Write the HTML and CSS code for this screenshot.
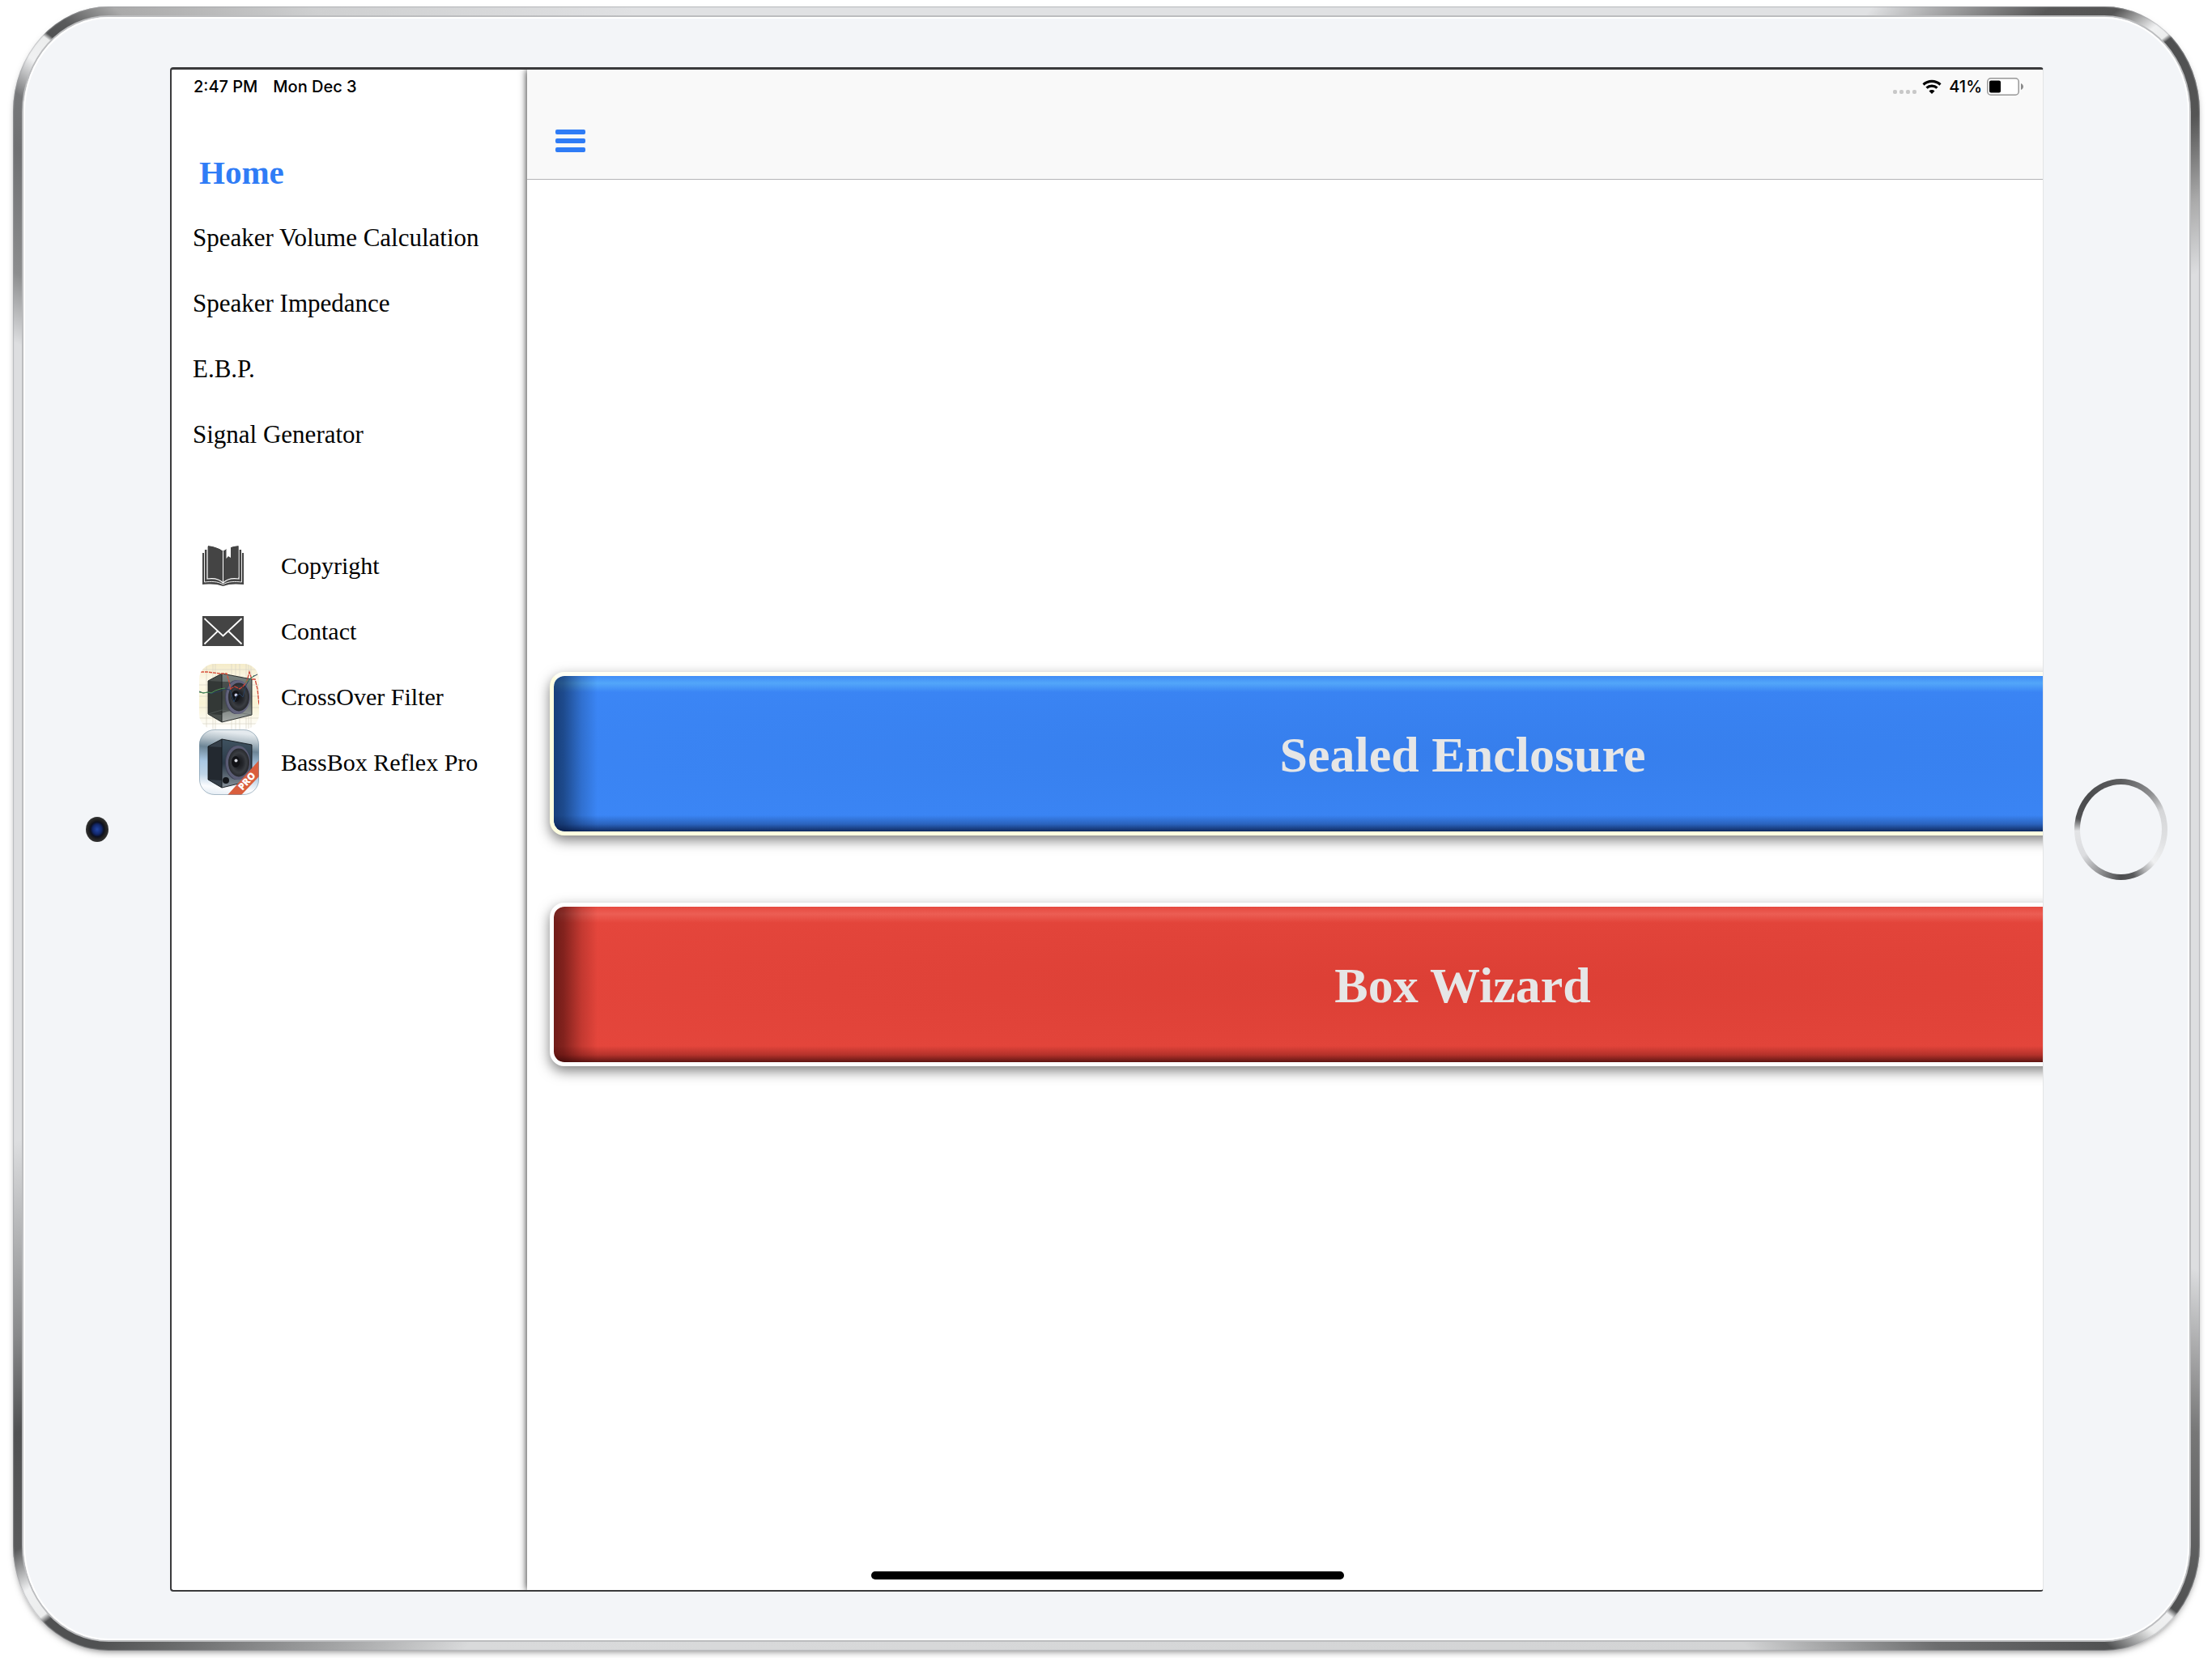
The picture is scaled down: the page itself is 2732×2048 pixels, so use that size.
FILE: index.html
```
<!DOCTYPE html>
<html lang="en">
<head>
    <meta charset="utf-8">
    <title>Speaker Box</title>
    <link rel="stylesheet" href="styles.css">
</head>
<body>
    <div class="device">
        <div class="bezel">
            <div class="bezel-side">
                <span class="camera"></span>
            </div>

            <div class="screen">
                <aside class="sidebar">
                    <div class="status-bar">
                        <span>2:47 PM</span>
                        <span>Mon Dec 3</span>
                    </div>
                    <nav class="menu">
                        <a class="menu-home" href="#home">Home</a>
                        <a class="menu-item" href="#volume">Speaker Volume Calculation</a>
                        <a class="menu-item" href="#impedance">Speaker Impedance</a>
                        <a class="menu-item" href="#ebp">E.B.P.</a>
                        <a class="menu-item" href="#signal">Signal Generator</a>
                        <span class="menu-gap"></span>
                        <a class="menu-item menu-icon-item" href="#copyright">
                            <span class="menu-icon">
                                <svg class="glyph" width="51" height="50" viewBox="0 0 51 50">
                                    <path d="M0 9v39c9-1 18-1 25.500 2 7.500-3 16.500-3 25.500-2V9" fill="#444"/>
                                    <path d="M2.500 5v40c8-1 17-1 23 3 6-4 15-4 23-3V5" fill="#444" stroke="#fff" stroke-width=".9"/>
                                    <path d="M6 1v40c7-1 14-1 19.500 5 5.500-6 12.500-6 19.500-5V1" fill="#444" stroke="#fff" stroke-width="1.200"/>
                                    <path d="M6.500 0C14 1 20 3 25.500 7 31 3 37 1 44.500 0z" fill="#fff"/>
                                    <path d="M7 0v39c8 0 14 1 18.500 6V7C20 3 14 1 7 0z" fill="#444"/>
                                    <path d="M44.500 0v39c-8 0-14 1-19 6V7C31 3 37 1 44.500 0z" fill="#444"/>
                                    <path d="M25.500 7v38" fill="none" stroke="#fff" stroke-width="1"/>
                                    <path d="M29.500 3v13l2.500-3 3 2V1z" fill="#fff"/>
                                </svg>
                            </span>
                            Copyright
                        </a>
                        <a class="menu-item menu-icon-item" href="#contact">
                            <span class="menu-icon">
                                <svg class="glyph" width="51" height="37" viewBox="0 0 51 37">
                                    <rect width="51" height="37" fill="#444"/>
                                    <path d="M2.500 3l23 21.500L48.500 3M2.500 34.500L19 18.500M48.500 34.500L32 18.500" fill="none" stroke="#fff" stroke-width="1.800"/>
                                </svg>
                            </span>
                            Contact
                        </a>
                        <a class="menu-item menu-icon-item" href="#crossover">
                            <span class="menu-icon">
                                <svg width="74" height="81" viewBox="0 0 74 81">
                                    <defs>
                                        <linearGradient id="paper" x1="0" y1="0" x2="0" y2="1">
                                            <stop offset="0" stop-color="#f4ebc8"/>
                                            <stop offset=".25" stop-color="#fdf9ea"/>
                                            <stop offset=".6" stop-color="#f9f3d4"/>
                                            <stop offset="1" stop-color="#fff"/>
                                        </linearGradient>
                                        <linearGradient id="glass" x1="0" y1="0" x2="0" y2="1">
                                            <stop offset="0" stop-color="#7b8582"/>
                                            <stop offset=".5" stop-color="#5d6563"/>
                                            <stop offset="1" stop-color="#a6aba8"/>
                                        </linearGradient>
                                        <radialGradient id="cone">
                                            <stop offset="0" stop-color="#15171a"/>
                                            <stop offset=".4" stop-color="#24262b"/>
                                            <stop offset=".7" stop-color="#3a3d42"/>
                                            <stop offset="1" stop-color="#26282c"/>
                                        </radialGradient>
                                        <clipPath id="tile"><rect width="74" height="81" rx="19"/></clipPath>
                                    </defs>
                                    <g clip-path="url(#tile)">
                                        <rect width="74" height="81" fill="url(#paper)"/>
                                        <path d="M0 7h74M0 26h74M0 40h74M0 54h74M0 67h74M0 74h74M9 0v81M17 0v81M20 0v81M40 0v81M45 0v81M50 0v81M58 0v81M61 0v81M64 0v81" stroke="#d8d4c6" stroke-width=".7"/>
                                        <path d="M11 21l17-9v60l-17-10z" fill="#4a504d"/>
                                        <path d="M28 12l37 7v44l-37 9z" fill="url(#glass)"/>
                                        <path d="M11 21l17 1v41l-17-1z" fill="#292d2c" opacity=".7"/>
                                        <path d="M28 22l10 0v36l-10 3z" fill="#2f3432" opacity=".6"/>
                                        <path d="M11 21l17-9 37 7v44l-37 9-17-10zM28 12v60" fill="none" stroke="#1c2020" stroke-width=".9"/>
                                        <path d="M11 62l17-5 37 6" fill="none" stroke="#606866" stroke-width=".6"/>
                                        <ellipse cx="46" cy="41" rx="14" ry="21" fill="#43445c"/>
                                        <ellipse cx="48" cy="41" rx="15" ry="21" fill="#62637c"/>
                                        <ellipse cx="49" cy="41" rx="13" ry="17.500" fill="url(#cone)"/>
                                        <ellipse cx="45" cy="40" rx="5" ry="7" fill="#111216"/>
                                        <circle cx="45.500" cy="38.500" r="2" fill="#c5c9e2"/>
                                        <path d="M2 10l8 0 8 1 8 1 8 0 3 10 2 10" fill="none" stroke="#d8503c" stroke-width="1.300" stroke-dasharray="4 1"/>
                                        <path d="M38 31l6-3 6 3 5-4 4-6 3-11 3 9 4 0 3 12 2 20" fill="none" stroke="#cf4334" stroke-width="1.300" stroke-dasharray="5 1"/>
                                        <path d="M0 34l5 2 6-1 4 2 5-2 6-1 5-3 7 1 3 9 2 6 3-7 4-3 4 4 4-15 5-8 5-3 4-2" fill="none" stroke="#28405e" stroke-width="1"/>
                                        <path d="M0 35l5 1 6-1 4 1 5-3 6-2 6-1M57 23l6-4 5-5" fill="none" stroke="#4b9454" stroke-width="1"/>
                                    </g>
                                </svg>
                            </span>
                            CrossOver Filter
                        </a>
                        <a class="menu-item menu-icon-item" href="#bassbox">
                            <span class="menu-icon">
                                <svg width="74" height="81" viewBox="0 0 74 81">
                                    <defs>
                                        <linearGradient id="sky" x1=".1" y1="0" x2="0" y2="1">
                                            <stop offset="0" stop-color="#e4eaee"/>
                                            <stop offset=".12" stop-color="#b4c1c9"/>
                                            <stop offset=".26" stop-color="#6c8596"/>
                                            <stop offset=".48" stop-color="#a9c8e4"/>
                                            <stop offset=".68" stop-color="#bfd5e8"/>
                                            <stop offset=".85" stop-color="#fbfcfe"/>
                                            <stop offset="1" stop-color="#dfe9f2"/>
                                        </linearGradient>
                                        <linearGradient id="night" x1="0" y1="0" x2="0" y2="1">
                                            <stop offset="0" stop-color="#3f5260"/>
                                            <stop offset=".5" stop-color="#2c3b49"/>
                                            <stop offset="1" stop-color="#88929b"/>
                                        </linearGradient>
                                    </defs>
                                    <g clip-path="url(#tile)">
                                        <rect width="74" height="81" fill="url(#sky)"/>
                                        <path d="M11 21l17-9v60l-17-10z" fill="#36404a"/>
                                        <path d="M28 12l37 7v44l-37 9z" fill="url(#night)"/>
                                        <path d="M11 21l17 1v41l-17-1z" fill="#1b1f25" opacity=".7"/>
                                        <path d="M11 21l17-9 37 7v44l-37 9-17-10zM28 12v60" fill="none" stroke="#12171c" stroke-width=".9"/>
                                        <ellipse cx="46" cy="41" rx="14" ry="21" fill="#3d4055"/>
                                        <ellipse cx="48" cy="41" rx="15" ry="21" fill="#5a5c74"/>
                                        <ellipse cx="49" cy="41" rx="13" ry="17.500" fill="url(#cone)"/>
                                        <ellipse cx="45" cy="40" rx="5" ry="7" fill="#111216"/>
                                        <circle cx="45.500" cy="38.500" r="2" fill="#d6d8df"/>
                                        <circle cx="33" cy="63" r="4" fill="#14171b"/>
                                        <path d="M35 81L74 38v20L52 81z" fill="#d95e3d"/>
                                    </g>
                                    <rect x=".5" y=".5" width="73" height="80" rx="18.500" fill="none" stroke="#7d96a6" stroke-opacity=".6"/>
                                    <text class="ribbon" x="0" y="4" text-anchor="middle" transform="translate(59 64) rotate(-48)">PRO</text>
                                </svg>
                            </span>
                            BassBox Reflex Pro
                        </a>
                    </nav>
                </aside>

                <main class="main">
                    <header class="toolbar">
                        <div class="status-bar status-right">
                            <span class="signal"><i></i><i></i><i></i><i></i></span>
                            <svg class="wifi" width="24" height="18" viewBox="0 0 24 18">
                                <path d="M1.500 6.500a15.500 15.500 0 0 1 21 0M5.500 10.700a9.500 9.500 0 0 1 13 0" fill="none" stroke="#000" stroke-width="3.200"/>
                                <path d="M12 18l-3.500-3.600a5 5 0 0 1 7 0z"/>
                            </svg>
                            <span>41%</span>
                            <svg class="battery" width="45" height="22" viewBox="0 0 45 22">
                                <rect x=".8" y=".8" width="38.400" height="20.400" rx="4" fill="#fff" stroke="#979797" stroke-width="1.500"/>
                                <rect x="3" y="3.500" width="14" height="15" rx="2"/>
                                <path d="M42 7c4 2 4 6 0 8z" fill="#8a8a8a"/>
                            </svg>
                        </div>
                        <button class="menu-toggle" type="button" aria-label="Menu">
                            <span></span><span></span><span></span>
                        </button>
                    </header>
                    <div class="content">
                        <button class="big-button blue" type="button">Sealed Enclosure</button>
                        <button class="big-button red" type="button">Box Wizard</button>
                    </div>
                </main>
                <span class="home-indicator"></span>
            </div>

            <div class="bezel-side">
                <span class="home-button"></span>
            </div>
        </div>
    </div>
</body>
</html>
```
FILE: styles.css
```
* {
    box-sizing: border-box;
}

body {
    margin: 0;
    padding: 8px 15px 9px 16px;
    height: 100vh;
    background-color: #fff;
    font-family: "Liberation Serif", "Times New Roman", serif;
    color: #000;
}

a {
    color: inherit;
    text-decoration: none;
}

button {
    font-family: inherit;
    cursor: pointer;
}

/* tablet frame */
.device {
    height: 100%;
    padding: 13px;
    border-radius: 118px / 130px;
    background: conic-gradient(
        #e0e1e3 0deg, #e0e1e3 43deg, #585858 49deg, #555 51deg,
        #f0f1f2 52.6deg, #eceded 53.2deg, #4f5051 53.4deg, #555 56.8deg,
        #aaa 60deg, #dddee0 63deg, #dddee0 112deg, #777 119deg,
        #4f5051 126.2deg, #f0f1f2 126.5deg, #eceded 127.5deg, #505152 129.2deg,
        #6c6d6e 134.5deg, #d3d4d5 142deg, #d9dadb 218deg, #88898a 226deg,
        #505152 231deg, #505152 233.2deg, #eceded 233.5deg, #f0f1f2 234.8deg,
        #5a5b5c 236.5deg, #505152 241deg, #88898a 245deg, #dddee0 254deg,
        #dddee0 294deg, #8c8d8e 297deg, #6f7072 302deg, #77787a 304deg,
        #f0f1f2 305.6deg, #eceded 306.7deg, #505152 306.9deg, #5a5b5c 307.8deg,
        #aaa 309.6deg, #cfd0d1 316deg, #e0e1e3 330deg, #e0e1e3 360deg);
    box-shadow: 0 4px 8px -3px rgba(0, 0, 0, 0.5), inset 0 0 1px 1px rgba(160, 162, 165, 0.6);
}

.bezel {
    display: grid;
    grid-template-columns: 181px 1fr 180px;
    height: 100%;
    padding: 62px 0 60px;
    border-radius: 105px / 117px;
    background-color: #f3f5f8;
    box-shadow: 0 0 0 2px #bcbdbf, inset 0 0 0 2px #fff;
}

.bezel-side {
    display: flex;
    align-items: center;
    justify-content: center;
}

.camera {
    width: 28px;
    height: 31px;
    border-radius: 50%;
    background: radial-gradient(ellipse, #2348a8 0, #12276a 28%, #0c1020 42%, #1d1d1f 52%, #333 70%);
}

.home-button {
    width: 115px;
    height: 125px;
    padding: 7px;
    margin-left: 10px;
    border-radius: 50%;
    background: conic-gradient(#5c5d5f 0deg, #8d8e90 40deg, #d5d6d8 65deg, #dedfe1 100deg,
        #eff0f1 135deg, #b0b1b3 150deg, #58595b 165deg, #4c4d4f 180deg, #8e8f91 205deg,
        #dcdde0 235deg, #e3e4e6 268deg, #515254 284deg, #4a4b4d 315deg, #5c5d5f 360deg);
}

.home-button::before {
    content: "";
    display: block;
    height: 100%;
    border-radius: 50%;
    background-color: #f3f5f8;
}

.screen {
    position: relative;
    display: grid;
    grid-template-columns: 439px 1fr;
    overflow: hidden;
    border: solid #3a3a3c;
    border-width: 3px 1px 2px 2px;
    border-right-color: #e3e4e6;
    border-radius: 4px;
    background-color: #fff;
}

.status-bar {
    display: flex;
    align-items: center;
    height: 42px;
    font-family: Inter, "Liberation Sans", sans-serif;
    font-size: 20px;
    font-weight: 500;
}

/* side menu */
.sidebar .status-bar {
    gap: 19px;
    padding-left: 27px;
}

.menu {
    display: flex;
    flex-direction: column;
    padding-top: 44px;
}

.menu-home,
.menu-item,
.menu-gap {
    display: flex;
    align-items: center;
    height: 81px;
    padding-left: 26px;
    font-size: 31px;
    white-space: nowrap;
}

.menu-home {
    padding-left: 34px;
    font-size: 41px;
    font-weight: bold;
    color: #2f7cf6;
}

.menu-icon-item {
    padding-left: 34px;
    font-size: 30px;
}

.menu-icon {
    display: flex;
    width: 101px;
}

.menu-icon svg {
    overflow: visible;
}

.glyph {
    margin-left: 4px;
}

.ribbon {
    font-family: "Open Sans", sans-serif;
    font-size: 12px;
    font-weight: 800;
    fill: #fff;
}

/* page, pushed to the right by the open menu */
.main {
    display: flex;
    flex-direction: column;
    min-width: 0;
    overflow: hidden;
    background-color: #fff;
    box-shadow: 0 0 9px rgba(0, 0, 0, 0.9);
}

.toolbar {
    height: 136px;
    border-bottom: 1px solid #b5b5b7;
    background-color: #f9f9f9;
}

.status-right {
    justify-content: flex-end;
    padding-right: 24px;
}

.signal {
    display: flex;
    gap: 3px;
    padding-top: 12px;
}

.signal i {
    width: 5px;
    height: 5px;
    border-radius: 2px;
    background-color: #c8c8c8;
}

.wifi {
    margin: 0 9px 0 7px;
}

.battery {
    margin-left: 6px;
}

.menu-toggle {
    display: flex;
    flex-direction: column;
    gap: 5px;
    width: 37px;
    margin: 32px 0 0 35px;
    padding: 0;
    border: 0;
    background: none;
}

.menu-toggle span {
    height: 6px;
    border-radius: 2px;
    background-color: #2f7cf6;
}

.content {
    display: flex;
    flex: 1;
    flex-direction: column;
    justify-content: center;
    gap: 83px;
    width: calc(100% + 439px);
    padding: 0 28px 40px;
}

.big-button {
    height: 202px;
    padding: 4px 0 0;
    border: 5px solid #fff;
    border-radius: 18px;
    font-size: 62px;
    font-weight: bold;
    color: #e6e6e6;
    background-clip: padding-box;
    box-shadow: 0 6px 16px rgba(0, 0, 0, 0.5);
}

.blue {
    border-color: #fffff4 #ffffe0 #ffffe0;
    background-image:
        linear-gradient(to top, rgba(5, 20, 60, 0.8), rgba(5, 20, 60, 0.3) 9px, transparent 20px),
        linear-gradient(to right, rgba(5, 25, 55, 0.65), rgba(5, 25, 55, 0.55) 12px, rgba(5, 25, 55, 0.2) 34px, transparent 54px),
        linear-gradient(rgba(85, 170, 250, 0.2), rgba(85, 170, 250, 0.9) 9px, transparent 20px),
        radial-gradient(#367eec, #3c87f7);
}

.red {
    background-image:
        linear-gradient(to top, rgba(50, 5, 5, 0.75), rgba(70, 5, 5, 0.3) 9px, transparent 20px),
        linear-gradient(to right, rgba(50, 5, 5, 0.65), rgba(50, 5, 5, 0.55) 12px, rgba(60, 5, 5, 0.2) 34px, transparent 54px),
        linear-gradient(rgba(240, 100, 90, 0.1), rgba(238, 100, 90, 0.8) 9px, transparent 20px),
        radial-gradient(#dc3f35, #e6473d);
}

.home-indicator {
    position: absolute;
    bottom: 13px;
    left: 50%;
    width: 584px;
    height: 10px;
    margin-left: -292px;
    border-radius: 5px;
    background-color: #000;
}
```
